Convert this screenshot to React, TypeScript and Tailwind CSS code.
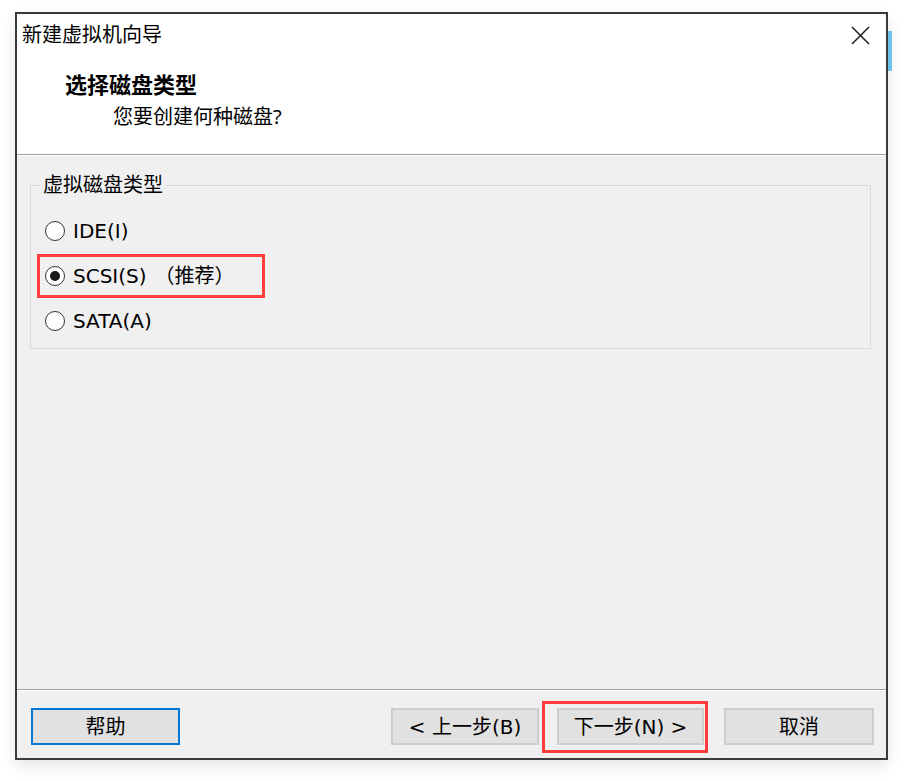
import React from 'react';

const font = { fontFamily: '"Noto Sans", "Noto Sans CJK SC", sans-serif' };
const latin = { fontFamily: '"DejaVu Sans", "Noto Sans CJK SC", sans-serif' };

const Radio: React.FC<{ checked?: boolean; label: React.ReactNode }> = ({ checked, label }) => (
  <div className="flex h-[45px] items-center gap-[8px]">
    <span className="flex h-[20px] w-[20px] items-center justify-center rounded-full border border-[#333] bg-white">
      {checked && <span className="h-[10px] w-[10px] rounded-full bg-[#1a1a1a]" />}
    </span>
    <span className="text-[20px] leading-none text-black" style={latin}>
      {label}
    </span>
  </div>
);

const Btn: React.FC<{ children: React.ReactNode; focused?: boolean; className?: string }> = ({
  children,
  focused,
  className = 'w-[148px]',
}) => (
  <button
    style={latin}
    className={
      focused
        ? `flex h-[37px] ${className} items-center justify-center border-2 border-[#0078d7] bg-[#e1e1e1] text-[20px] text-black`
        : `flex h-[37px] ${className} items-center justify-center border-2 border-[#cdcdcd] bg-[#e1e1e1] text-[20px] text-black`
    }
  >
    {children}
  </button>
);

export default function App() {
  return (
    <div className="relative h-[781px] w-[911px] overflow-hidden bg-white pl-[15px] pt-[12px]" style={font}>
      {/* window behind the dialog */}
      <div className="absolute left-[888px] top-[31px] h-[40px] w-[4px] bg-[#6cc4ec]" />

      <div className="flex h-[748px] w-[873px] flex-col border-2 border-[#3a3a3a] bg-white shadow-[0_6px_14px_rgba(0,0,0,0.10)]">
        {/* title bar */}
        <div className="flex h-[42px] items-center justify-between pl-[5px] pr-[16px]">
          <span className="text-[20px] text-black">新建虚拟机向导</span>
          <svg width="19" height="19" viewBox="0 0 19 19" className="text-[#222]">
            <path d="M1 1 L18 18 M18 1 L1 18" stroke="currentColor" strokeWidth="1.6" />
          </svg>
        </div>

        {/* header */}
        <div className="h-[99px] border-b border-[#a0a0a0] pl-[48px] pt-[13px]">
          <div className="text-[22px] font-bold leading-[30px] text-black">选择磁盘类型</div>
          <div className="mt-[4px] pl-[48px] text-[20px] leading-[28px] text-black">您要创建何种磁盘?</div>
        </div>
        <div className="h-px bg-white" />

        {/* body */}
        <div className="flex-1 bg-[#f0f0f0] pl-[13px] pr-[15px] pt-[15px]">
          <fieldset className="h-[178px] border border-[#dadada]">
            <legend className="ml-[9px] px-[3px] text-[20px] leading-[28px] text-black">虚拟磁盘类型</legend>
            <div className="pl-[14px] pt-[9px]">
              <Radio label="IDE(I)" />
              <Radio
                checked
                label={
                  <>
                    SCSI(S)<span className="ml-[8px]">（推荐）</span>
                  </>
                }
              />
              <Radio label="SATA(A)" />
            </div>
          </fieldset>
        </div>

        {/* footer */}
        <div className="h-px bg-[#a0a0a0]" />
        <div className="h-px bg-white" />
        <div className="flex h-[67px] items-start justify-between bg-[#f0f0f0] pl-[14px] pr-[12px] pt-[17px]">
          <Btn focused className="w-[149px]">帮助</Btn>
          <div className="flex">
            <Btn>&lt; 上一步(B)</Btn>
            <div className="ml-[18px]">
              <Btn className="w-[147px]">下一步(N) &gt;</Btn>
            </div>
            <div className="ml-[20px]">
              <Btn className="w-[150px]">取消</Btn>
            </div>
          </div>
        </div>
      </div>

      {/* annotation boxes */}
      <div className="pointer-events-none absolute left-[37px] top-[254px] h-[44px] w-[228px] border-[3px] border-[#ff3b3b]" />
      <div className="pointer-events-none absolute left-[542px] top-[701px] h-[52px] w-[166px] border-[3px] border-[#ff3b3b]" />
    </div>
  );
}
